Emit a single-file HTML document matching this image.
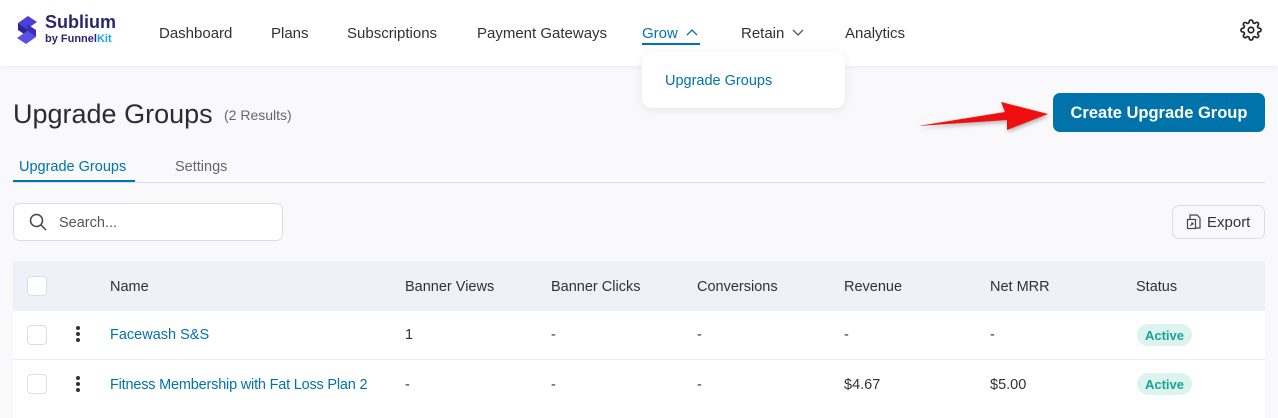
<!DOCTYPE html>
<html><head><style>
*{box-sizing:border-box;margin:0;padding:0}
body{width:1278px;height:418px;overflow:hidden;background:#f9f9fb;font-family:"Liberation Sans",sans-serif;color:#353030;position:relative}
.hdr{position:absolute;left:0;top:0;width:1278px;height:66px;background:#fff;box-shadow:0 1px 4px rgba(0,0,0,.06)}
.a{position:absolute;white-space:nowrap}
.nav{font-size:15px;top:25px;color:#353030}
.btn{position:absolute;left:1053px;top:93px;width:212px;height:39px;background:#0073aa;border-radius:7px;color:#fff;font-size:16.5px;font-weight:bold;text-align:center;line-height:41px}
.cb{position:absolute;left:27px;width:20px;height:20px;border:1.5px solid #dcdce6;border-radius:4px;background:#fff}
.th{font-size:14.5px;top:279px;color:#353030}
.td{font-size:14.5px;color:#353030}
.lnk{color:#0073aa}
.badge{position:absolute;left:1137px;width:55px;height:22px;border-radius:11px;background:#dcf3ee;color:#18a58f;font-size:13px;font-weight:bold;text-align:center;line-height:23px}
.dots{position:absolute;left:76px;width:4px}
.dots i{display:block;width:4px;height:4px;border-radius:2px;background:#333;margin-bottom:2px}
</style></head><body>
<div class="hdr"></div>
<svg class="a" style="left:15px;top:14px" width="24" height="32" viewBox="0 0 24 32"><path d="M3 9 L13 2 L22 8 L12 15 Z" fill="#4a3fd6"/><path d="M3 9 L12 15 L12 22 L3 16Z" fill="#2b2396"/><path d="M21 23 L11 30 L2 24 L12 17 Z" fill="#5b4fe6"/><path d="M21 23 L12 17 L12 10 L21 16Z" fill="#3a30b8"/></svg>
<div class="a" style="left:45px;top:12px;font-size:18px;font-weight:bold;color:#2a2570">Sublium</div>
<div class="a" style="left:45px;top:33px;font-size:11px;font-weight:bold;color:#2a2570">by Funnel<span style="color:#1aa3e8">Kit</span></div>
<div class="a nav" style="left:159px">Dashboard</div>
<div class="a nav" style="left:271px">Plans</div>
<div class="a nav" style="left:347px">Subscriptions</div>
<div class="a nav" style="left:477px">Payment Gateways</div>
<div class="a nav" style="left:642px;color:#0073aa">Grow</div>
<svg class="a" style="left:686px;top:28px" width="12" height="8"><path d="M1 7 L6 2 L11 7" stroke="#0073aa" fill="none" stroke-width="1.3"/></svg>
<div class="a" style="left:642px;top:43px;width:58px;height:2px;background:#0073aa"></div>
<div class="a nav" style="left:741px">Retain</div>
<svg class="a" style="left:792px;top:29px" width="12" height="8"><path d="M1 1 L6 6 L11 1" stroke="#555" fill="none" stroke-width="1.3"/></svg>
<div class="a nav" style="left:845px">Analytics</div>
<svg class="a" style="left:1240px;top:19px" width="22" height="22" viewBox="0 0 24 24" fill="none" stroke="#222" stroke-width="1.8"><circle cx="12" cy="12" r="3"/><path d="M19.4 15a1.650 1.65 0 0 0 .33 1.82l.06.06a2 2 0 1 1-2.83 2.830l-.06-.06a1.65 1.65 0 0 0-1.82-.33 1.65 1.65 0 0 0-1 1.51V21a2 2 0 1 1-4 0v-.09A1.65 1.65 0 0 0 9 19.4a1.65 1.65 0 0 0-1.82.33l-.06.06a2 2 0 1 1-2.83-2.83l.06-.06a1.65 1.65 0 0 0 .33-1.82 1.65 1.65 0 0 0-1.51-1H3a2 2 0 1 1 0-4h.09A1.65 1.65 0 0 0 4.6 9a1.65 1.65 0 0 0-.33-1.82l-.06-.06a2 2 0 1 1 2.83-2.83l.06.06a1.65 1.65 0 0 0 1.82.33H9a1.65 1.65 0 0 0 1-1.51V3a2 2 0 1 1 4 0v.09a1.65 1.65 0 0 0 1 1.51 1.65 1.65 0 0 0 1.82-.33l.06-.06a2 2 0 1 1 2.83 2.83l-.06.06a1.65 1.65 0 0 0-.33 1.82V9a1.65 1.65 0 0 0 1.51 1H21a2 2 0 1 1 0 4h-.09a1.65 1.65 0 0 0-1.51 1z"/></svg>
<div class="a" style="left:642px;top:52px;width:203px;height:56px;background:#fff;border-radius:10px;box-shadow:0 2px 10px rgba(0,0,0,.08)"></div>
<div class="a" style="left:665px;top:73px;font-size:14.5px;color:#0073aa">Upgrade Groups</div>
<div class="a" style="left:13px;top:99px;font-size:27px;color:#2c2c2c">Upgrade Groups</div>
<div class="a" style="left:224px;top:107px;font-size:14px;color:#666">(2 Results)</div>
<svg class="a" style="left:915px;top:98px" width="135" height="36"><path d="M3 28 L90 14 L86 4 L133 16 L92 32 L92 22 Z" fill="#f00e0e" style="filter:drop-shadow(1px 2px 2px rgba(0,0,0,.3))"/></svg>
<div class="btn">Create Upgrade Group</div>
<div class="a" style="left:19px;top:159px;font-size:14.5px;color:#0073aa">Upgrade Groups</div>
<div class="a" style="left:13px;top:180px;width:122px;height:2px;background:#0073aa"></div>
<div class="a" style="left:175px;top:159px;font-size:14.5px;color:#666">Settings</div>
<div class="a" style="left:13px;top:182px;width:1252px;height:1px;background:#dedee8"></div>
<div class="a" style="left:13px;top:203px;width:270px;height:38px;background:#fff;border:1px solid #dcdce4;border-radius:7px"></div>
<svg class="a" style="left:29px;top:213px" width="18" height="18"><circle cx="7.5" cy="7.5" r="6" stroke="#444" stroke-width="1.5" fill="none"/><path d="M12 12 L17 17" stroke="#444" stroke-width="1.5"/></svg>
<div class="a" style="left:59px;top:215px;font-size:14.5px;color:#555">Search...</div>
<div class="a" style="left:1172px;top:205px;width:93px;height:34px;background:#f9f9fb;border:1px solid #dcdce4;border-radius:7px"></div>
<svg class="a" style="left:1186px;top:214px" width="16" height="17"><path d="M4 1 H11 L14 4 V14 H4 Z" stroke="#444" fill="none" stroke-width="1.2"/><rect x="1.5" y="5.5" width="8" height="9" fill="#fff" stroke="#444" stroke-width="1.2"/><path d="M4 12 L7 9 M5 9 H7 V11" stroke="#444" fill="none" stroke-width="1"/></svg>
<div class="a" style="left:1207px;top:214px;font-size:15px;color:#333">Export</div>
<div class="a" style="left:13px;top:261px;width:1252px;height:50px;background:#f0f0f8"></div>
<div class="a" style="left:13px;top:311px;width:1252px;height:107px;background:#fff"></div>
<div class="a" style="left:13px;top:359px;width:1252px;height:1px;background:#ececf2"></div>
<div class="cb" style="top:276px"></div>
<div class="th a" style="left:110px">Name</div>
<div class="th a" style="left:405px">Banner Views</div>
<div class="th a" style="left:551px">Banner Clicks</div>
<div class="th a" style="left:697px">Conversions</div>
<div class="th a" style="left:844px">Revenue</div>
<div class="th a" style="left:990px">Net MRR</div>
<div class="th a" style="left:1136px">Status</div>
<div class="cb" style="top:325px"></div>
<div class="dots" style="top:326px"><i></i><i></i><i></i></div>
<div class="a td lnk" style="left:110px;top:327px">Facewash S&amp;S</div>
<div class="a td" style="left:405px;top:327px">1</div>
<div class="a td" style="left:551px;top:327px">-</div>
<div class="a td" style="left:697px;top:327px">-</div>
<div class="a td" style="left:844px;top:327px">-</div>
<div class="a td" style="left:990px;top:327px">-</div>
<div class="badge" style="top:324px">Active</div>
<div class="cb" style="top:374px"></div>
<div class="dots" style="top:376px"><i></i><i></i><i></i></div>
<div class="a td lnk" style="left:110px;top:377px;letter-spacing:-0.2px">Fitness Membership with Fat Loss Plan 2</div>
<div class="a td" style="left:405px;top:377px">-</div>
<div class="a td" style="left:551px;top:377px">-</div>
<div class="a td" style="left:697px;top:377px">-</div>
<div class="a td" style="left:844px;top:377px">$4.67</div>
<div class="a td" style="left:990px;top:377px">$5.00</div>
<div class="badge" style="top:373px">Active</div>
</body></html>
